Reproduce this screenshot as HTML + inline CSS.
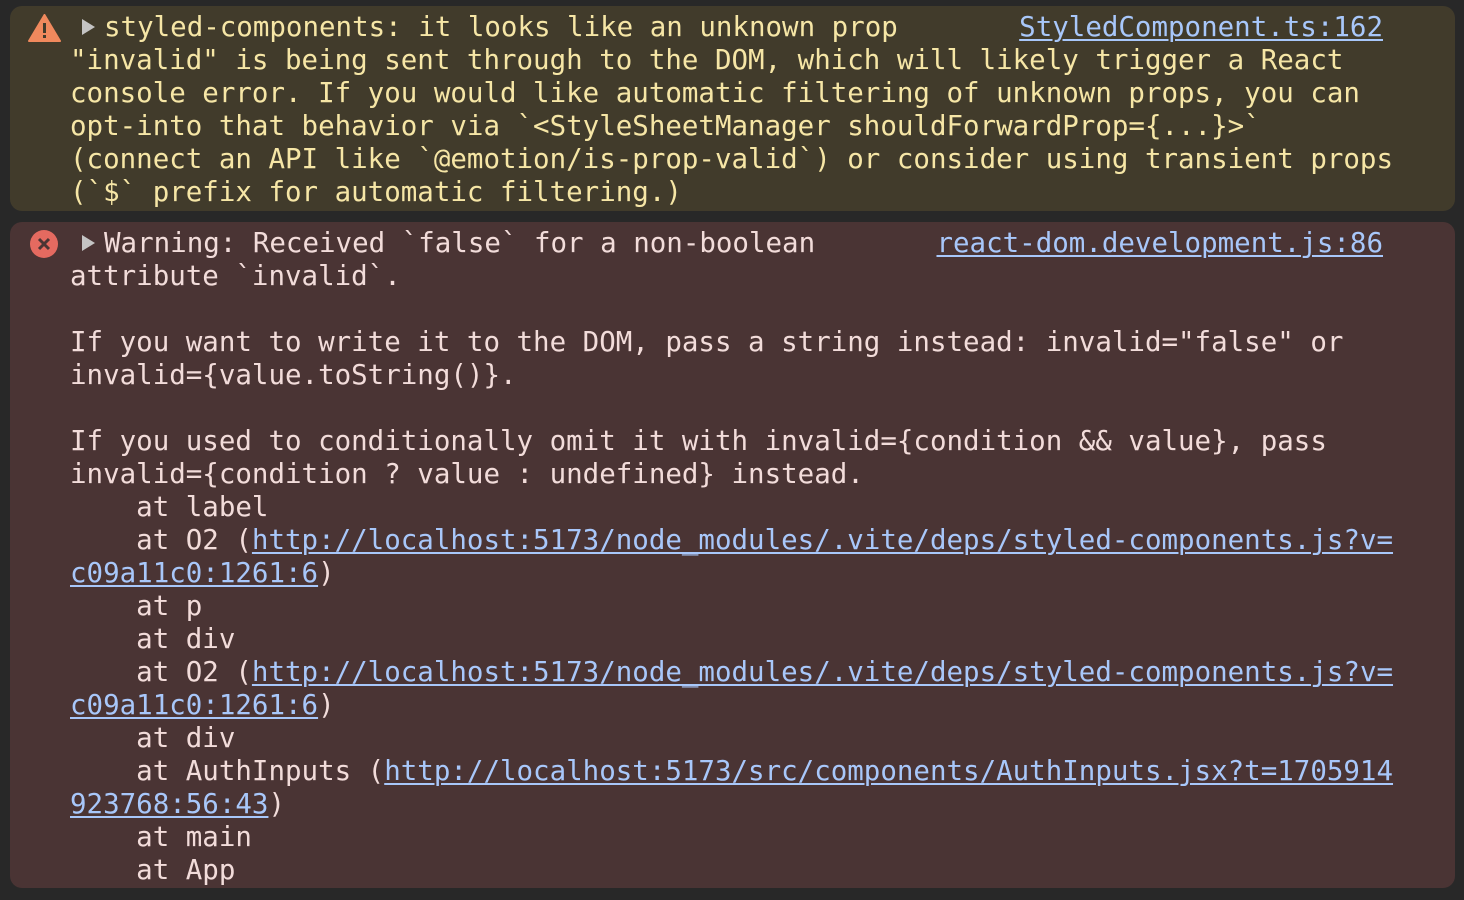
<!DOCTYPE html>
<html><head><meta charset="utf-8"><style>
html,body{margin:0;padding:0;background:#282828;width:1464px;height:900px;overflow:hidden}
.box{position:absolute;left:10px;width:1445px;border-radius:12px}
.w{top:6px;height:205px;background:#413b2b;color:#f6e6a6}
.e{top:222px;height:666px;background:#4a3434;color:#f2dcda}
.l,.r{height:33px;line-height:33px;white-space:pre;font-family:"DejaVu Sans Mono","Liberation Mono",monospace;font-size:27.47px}
.l{position:absolute;left:60px;margin-top:1px}
.r{position:absolute;right:72px;margin-top:1px}
a{color:#a8c7fa;text-decoration:underline;text-underline-offset:3px;text-decoration-thickness:2px}
.tri{position:absolute;width:0;height:0;border-left:13px solid #c4c4c4;border-top:8px solid transparent;border-bottom:8px solid transparent}
</style></head><body>
<div class="box w">
<svg style="position:absolute;left:18px;top:8px" width="33" height="28" viewBox="0 0 33 28"><path d="M16.5 1 L32 27 L1 27 Z" fill="#f0895d" stroke="#f0895d" stroke-linejoin="round" stroke-width="2"/><rect x="15" y="9" width="3" height="10" fill="#413b2b"/><rect x="15" y="21" width="3" height="3" fill="#413b2b"/></svg>
<div class="tri" style="left:72px;top:13px"></div>
<div class="l" style="left:94px;top:4px">styled-components: it looks like an unknown prop</div>
<div class="r" style="top:4px"><a>StyledComponent.ts:162</a></div>
<div class="l" style="top:37px">"invalid" is being sent through to the DOM, which will likely trigger a React</div>
<div class="l" style="top:70px">console error. If you would like automatic filtering of unknown props, you can</div>
<div class="l" style="top:103px">opt-into that behavior via `&lt;StyleSheetManager shouldForwardProp={...}&gt;`</div>
<div class="l" style="top:136px">(connect an API like `@emotion/is-prop-valid`) or consider using transient props</div>
<div class="l" style="top:169px">(`$` prefix for automatic filtering.)</div>
</div>
<div class="box e">
<svg style="position:absolute;left:20px;top:8px" width="28" height="28" viewBox="0 0 28 28"><circle cx="14" cy="14" r="14" fill="#e46a60"/><path d="M9 9 L19 19 M19 9 L9 19" stroke="#4a3434" stroke-width="3"/></svg>
<div class="tri" style="left:72px;top:13px"></div>
<div class="l" style="left:94px;top:4px">Warning: Received `false` for a non-boolean</div>
<div class="r" style="top:4px"><a>react-dom.development.js:86</a></div>
<div class="l" style="top:37px">attribute `invalid`.</div>
<div class="l" style="top:103px">If you want to write it to the DOM, pass a string instead: invalid="false" or</div>
<div class="l" style="top:136px">invalid={value.toString()}.</div>
<div class="l" style="top:202px">If you used to conditionally omit it with invalid={condition &amp;&amp; value}, pass</div>
<div class="l" style="top:235px">invalid={condition ? value : undefined} instead.</div>
<div class="l" style="top:268px">    at label</div>
<div class="l" style="top:301px">    at O2 (<a>http://localhost:5173/node_modules/.vite/deps/styled-components.js?v=</a></div>
<div class="l" style="top:334px"><a>c09a11c0:1261:6</a>)</div>
<div class="l" style="top:367px">    at p</div>
<div class="l" style="top:400px">    at div</div>
<div class="l" style="top:433px">    at O2 (<a>http://localhost:5173/node_modules/.vite/deps/styled-components.js?v=</a></div>
<div class="l" style="top:466px"><a>c09a11c0:1261:6</a>)</div>
<div class="l" style="top:499px">    at div</div>
<div class="l" style="top:532px">    at AuthInputs (<a>http://localhost:5173/src/components/AuthInputs.jsx?t=1705914</a></div>
<div class="l" style="top:565px"><a>923768:56:43</a>)</div>
<div class="l" style="top:598px">    at main</div>
<div class="l" style="top:631px">    at App</div>
</div>
</body></html>
